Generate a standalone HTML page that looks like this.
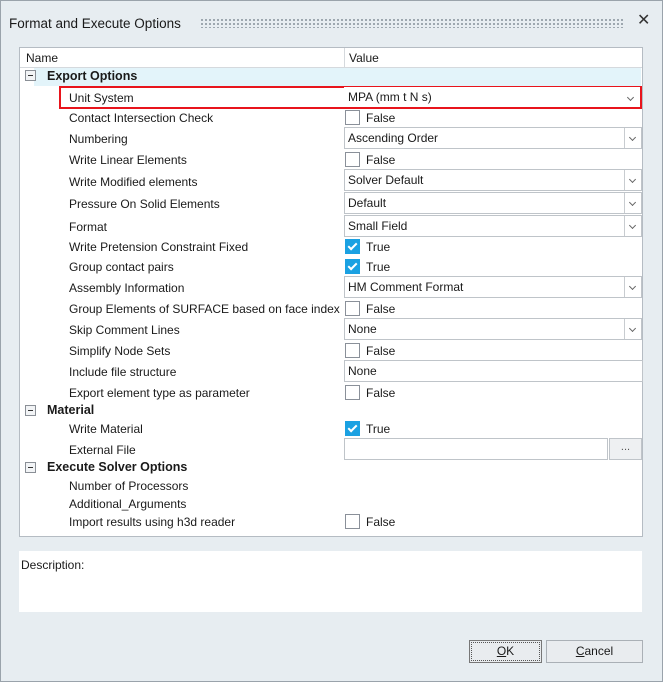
<!DOCTYPE html><html><head><style>
body{margin:0;width:663px;height:682px;background:#e7edf1;font-family:"Liberation Sans",sans-serif;font-size:12px;color:#1a1a1a;position:relative;overflow:hidden}
.a{position:absolute}
.win{left:0;top:0;width:661px;height:680px;border:1px solid #9aa3ab}
.t{position:absolute;white-space:nowrap;line-height:14px}
.n{left:69px}
.h{left:47px;font-weight:bold;font-size:12.5px}
.cb{position:absolute;left:345px;width:13px;height:13px;border:1px solid #8a9099;background:#fff}
.ck{background:#1ba1e2;border-color:#1ba1e2}
.ck:after{content:"";position:absolute;left:4px;top:1px;width:3px;height:7px;border:solid #fff;border-width:0 2px 2px 0;transform:rotate(45deg)}
.cv{position:absolute;left:366px}
.combo{position:absolute;left:344px;width:296px;height:20px;border:1px solid #bfc4c9;background:#fff}
.combo span{position:absolute;left:3px;top:3px}
.combo i{position:absolute;right:0;top:0;width:16px;height:20px;border-left:1px solid #c8ccd0}
.combo i:after{content:"";position:absolute;left:5px;top:7px;width:4px;height:4px;border:solid #666;border-width:0 1.5px 1.5px 0;transform:rotate(45deg)}
.pm{position:absolute;left:25px;width:9px;height:9px;border:1px solid #8a8f96;background:#f2f4f6}
.pm:after{content:"";position:absolute;left:2px;top:4px;width:5px;height:1px;background:#333}
</style></head><body>
<div class="a win"></div>
<div class="t" style="left:9px;top:17px;font-size:13.5px">Format and Execute Options</div>
<div class="a" style="left:200px;top:18px;width:425px;height:10px;background-image:radial-gradient(circle,#8a959e 0.9px,transparent 1.1px);background-size:4px 4px"></div>
<div class="t" style="left:637px;top:14px;font-size:16px;color:#333">✕</div>
<div class="a" style="left:19px;top:47px;width:622px;height:488px;background:#fff;border:1px solid #b5bcc3"></div>
<div class="a" style="left:20px;top:48px;width:622px;height:19px;background:#fff;border-bottom:1px solid #d5d9dd"></div>
<div class="a" style="left:344px;top:48px;width:1px;height:19px;background:#d5d9dd"></div>
<div class="t" style="left:26px;top:51px">Name</div>
<div class="t" style="left:349px;top:51px">Value</div>
<div class="a" style="left:34px;top:68px;width:607px;height:18px;background:#e3f4fa"></div>
<div class="pm" style="top:70px"></div><div class="t h" style="top:69px">Export Options</div>
<div class="a" style="left:59px;top:86px;width:579px;height:19px;border:2px solid #e8141c"></div>
<div class="t n" style="top:91px">Unit System</div>
<div class="combo" style="top:87px;border-color:#fff;width:294px;height:18px"><span style="top:2px">MPA (mm t N s)</span><i style="height:18px;border:0"></i></div>
<div class="t n" style="top:111px">Contact Intersection Check</div><div class="cb" style="top:110px"></div><div class="t cv" style="top:111px">False</div>
<div class="t n" style="top:132px">Numbering</div><div class="combo" style="top:127px"><span>Ascending Order</span><i></i></div>
<div class="t n" style="top:153px">Write Linear Elements</div><div class="cb" style="top:152px"></div><div class="t cv" style="top:153px">False</div>
<div class="t n" style="top:175px">Write Modified elements</div><div class="combo" style="top:169px"><span>Solver Default</span><i></i></div>
<div class="t n" style="top:197px">Pressure On Solid Elements</div><div class="combo" style="top:192px"><span>Default</span><i></i></div>
<div class="t n" style="top:220px">Format</div><div class="combo" style="top:215px"><span>Small Field</span><i></i></div>
<div class="t n" style="top:240px">Write Pretension Constraint Fixed</div><div class="cb ck" style="top:239px"></div><div class="t cv" style="top:240px">True</div>
<div class="t n" style="top:260px">Group contact pairs</div><div class="cb ck" style="top:259px"></div><div class="t cv" style="top:260px">True</div>
<div class="t n" style="top:281px">Assembly Information</div><div class="combo" style="top:276px"><span>HM Comment Format</span><i></i></div>
<div class="t n" style="top:302px">Group Elements of SURFACE based on face index</div><div class="cb" style="top:301px"></div><div class="t cv" style="top:302px">False</div>
<div class="t n" style="top:323px">Skip Comment Lines</div><div class="combo" style="top:318px"><span>None</span><i></i></div>
<div class="t n" style="top:344px">Simplify Node Sets</div><div class="cb" style="top:343px"></div><div class="t cv" style="top:344px">False</div>
<div class="t n" style="top:365px">Include file structure</div><div class="combo" style="top:360px;width:297px"><span>None</span></div>
<div class="t n" style="top:386px">Export element type as parameter</div><div class="cb" style="top:385px"></div><div class="t cv" style="top:386px">False</div>
<div class="pm" style="top:405px"></div><div class="t h" style="top:403px">Material</div>
<div class="t n" style="top:422px">Write Material</div><div class="cb ck" style="top:421px"></div><div class="t cv" style="top:422px">True</div>
<div class="t n" style="top:443px">External File</div><div class="combo" style="top:438px;width:262px"></div>
<div class="a" style="left:609px;top:438px;width:31px;height:20px;border:1px solid #bfc4c9;background:#eef0f2;text-align:center;font-size:11px;line-height:16px;color:#555">...</div>
<div class="pm" style="top:462px"></div><div class="t h" style="top:460px">Execute Solver Options</div>
<div class="t n" style="top:479px">Number of Processors</div>
<div class="t n" style="top:497px">Additional_Arguments</div>
<div class="t n" style="top:515px">Import results using h3d reader</div><div class="cb" style="top:514px"></div><div class="t cv" style="top:515px">False</div>
<div class="a" style="left:19px;top:551px;width:623px;height:61px;background:#fff"></div>
<div class="t" style="left:21px;top:558px">Description:</div>
<div class="a" style="left:469px;top:640px;width:71px;height:21px;border:1px solid #777;background:#e9ecef;text-align:center;line-height:21px"><div style="position:absolute;inset:1px;border:1px dotted #555"></div><u>O</u>K</div>
<div class="a" style="left:546px;top:640px;width:95px;height:21px;border:1px solid #aab0b6;background:#e9ecef;text-align:center;line-height:21px"><u>C</u>ancel</div>
</body></html>
